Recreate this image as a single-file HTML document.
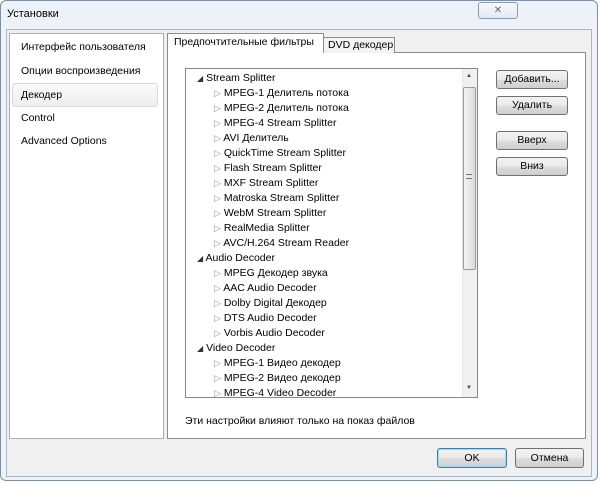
<!DOCTYPE html>
<html><head><meta charset="utf-8"><style>
*{margin:0;padding:0;box-sizing:border-box}
body{width:600px;height:483px;background:#fff;font-family:"Liberation Sans","DejaVu Sans",sans-serif;font-size:11px;color:#000;position:relative;overflow:hidden}
.abs{position:absolute;white-space:nowrap}
.win{left:0;top:0;width:598px;height:481px;background:#edf2f8;border:1px solid #7d8ea5;border-radius:6px}
.client{left:6px;top:29px;width:586px;height:448px;background:#f0f0f0;border:1px solid #a8b6c6}
.close{left:478px;top:2px;width:40px;height:17px;border:1px solid #8a9ab0;border-radius:3px;background:linear-gradient(#f7f9fc,#e2e9f2);text-align:center;font-size:10px;line-height:15px;color:#666}
.left{left:9px;top:33px;width:155px;height:406px;background:#fff;border:1px solid #adadad}
.item{position:absolute;left:11px;font-size:10.5px}
.sel{left:2px;top:49px;width:146px;height:24px;border:1px solid #dadada;border-radius:3px;background:linear-gradient(#fafafa,#eeeeee)}
.tabp{left:167px;top:52px;width:419px;height:387px;background:#fff;border:1px solid #8c8c8c}
.tab{background:#fff;border:1px solid #8c8c8c;border-bottom:none;padding-left:6px;font-size:10.5px}
.list{left:185px;top:68px;width:293px;height:330px;border:1px solid #828790;background:#fff;overflow:hidden}
.row{position:absolute;white-space:nowrap;font-size:10.5px}
.sb{left:462px;top:69px;width:15px;height:328px;background:#f0f0f0;border-left:1px solid #e6e6e6}
.thumb{left:463px;top:87px;width:13px;height:183px;border:1px solid #9b9b9b;border-radius:2px;background:linear-gradient(90deg,#f3f3f3,#dcdcdc)}
.btn{border:1px solid #707070;border-radius:3px;background:linear-gradient(#f2f2f2 0%,#ebebeb 50%,#dddddd 51%,#cfcfcf 100%);text-align:center;font-size:10.5px;line-height:17px}
</style></head><body>
<div class="abs win"></div>
<div class="abs" style="left:7px;top:8px;font-size:11px">Установки</div>
<div class="abs close">✕</div>
<div class="abs client"></div>
<div class="abs left">
<div class="abs sel"></div>
<div class="item" style="top:7px">Интерфейс пользователя</div>
<div class="item" style="top:31px">Опции воспроизведения</div>
<div class="item" style="top:55px">Декодер</div>
<div class="item" style="top:78px">Control</div>
<div class="item" style="top:101px">Advanced Options</div>
</div>
<div class="abs tabp"></div>
<div class="abs tab" style="left:323px;top:37px;width:72px;height:16px;background:#f3f3f3;line-height:14px;padding-left:4px">DVD декодер</div>
<div class="abs tab" style="left:167px;top:33px;width:157px;height:20px;line-height:17px;z-index:2">Предпочтительные фильтры</div>
<div class="abs list">
<div class="row" style="left:11px;top:3px"><span style="font-size:8px;color:#333">◢</span> Stream Splitter</div>
<div class="row" style="left:28px;top:18px"><span style="color:#999;font-size:9px">▷</span> MPEG-1 Делитель потока</div>
<div class="row" style="left:28px;top:33px"><span style="color:#999;font-size:9px">▷</span> MPEG-2 Делитель потока</div>
<div class="row" style="left:28px;top:48px"><span style="color:#999;font-size:9px">▷</span> MPEG-4 Stream Splitter</div>
<div class="row" style="left:28px;top:63px"><span style="color:#999;font-size:9px">▷</span> AVI Делитель</div>
<div class="row" style="left:28px;top:78px"><span style="color:#999;font-size:9px">▷</span> QuickTime Stream Splitter</div>
<div class="row" style="left:28px;top:93px"><span style="color:#999;font-size:9px">▷</span> Flash Stream Splitter</div>
<div class="row" style="left:28px;top:108px"><span style="color:#999;font-size:9px">▷</span> MXF Stream Splitter</div>
<div class="row" style="left:28px;top:123px"><span style="color:#999;font-size:9px">▷</span> Matroska Stream Splitter</div>
<div class="row" style="left:28px;top:138px"><span style="color:#999;font-size:9px">▷</span> WebM Stream Splitter</div>
<div class="row" style="left:28px;top:153px"><span style="color:#999;font-size:9px">▷</span> RealMedia Splitter</div>
<div class="row" style="left:28px;top:168px"><span style="color:#999;font-size:9px">▷</span> AVC/H.264 Stream Reader</div>
<div class="row" style="left:11px;top:183px"><span style="font-size:8px;color:#333">◢</span> Audio Decoder</div>
<div class="row" style="left:28px;top:198px"><span style="color:#999;font-size:9px">▷</span> MPEG Декодер звука</div>
<div class="row" style="left:28px;top:213px"><span style="color:#999;font-size:9px">▷</span> AAC Audio Decoder</div>
<div class="row" style="left:28px;top:228px"><span style="color:#999;font-size:9px">▷</span> Dolby Digital Декодер</div>
<div class="row" style="left:28px;top:243px"><span style="color:#999;font-size:9px">▷</span> DTS Audio Decoder</div>
<div class="row" style="left:28px;top:258px"><span style="color:#999;font-size:9px">▷</span> Vorbis Audio Decoder</div>
<div class="row" style="left:11px;top:273px"><span style="font-size:8px;color:#333">◢</span> Video Decoder</div>
<div class="row" style="left:28px;top:288px"><span style="color:#999;font-size:9px">▷</span> MPEG-1 Видео декодер</div>
<div class="row" style="left:28px;top:303px"><span style="color:#999;font-size:9px">▷</span> MPEG-2 Видео декодер</div>
<div class="row" style="left:28px;top:318px"><span style="color:#999;font-size:9px">▷</span> MPEG-4 Video Decoder</div>
</div>
<div class="abs sb"></div>
<div class="abs" style="left:466px;top:73px;font-size:6px;color:#444">▲</div>
<div class="abs" style="left:466px;top:385px;font-size:6px;color:#444">▼</div>
<div class="abs thumb"></div>
<div class="abs" style="left:466px;top:174px;width:6px;height:5px;border-top:1px solid #777;border-bottom:1px solid #777"></div>
<div class="abs btn" style="left:496px;top:70px;width:72px;height:19px">Добавить...</div>
<div class="abs btn" style="left:496px;top:96px;width:72px;height:19px">Удалить</div>
<div class="abs btn" style="left:496px;top:131px;width:72px;height:19px">Вверх</div>
<div class="abs btn" style="left:496px;top:157px;width:72px;height:19px">Вниз</div>
<div class="abs" style="left:185px;top:415px;font-size:10.5px">Эти настройки влияют только на показ файлов</div>
<div class="abs btn" style="left:437px;top:448px;width:70px;height:20px;border-color:#3c7fb1;box-shadow:inset 0 0 0 1px #9fd8f8;line-height:18px">OK</div>
<div class="abs btn" style="left:515px;top:448px;width:69px;height:20px;line-height:18px">Отмена</div>
</body></html>
